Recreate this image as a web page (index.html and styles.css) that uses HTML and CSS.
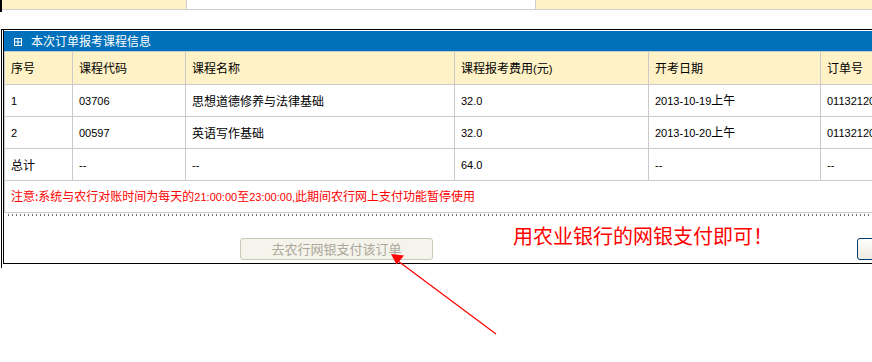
FILE: index.html
```html
<!DOCTYPE html>
<html lang="zh-CN">
<head>
<meta charset="utf-8">
<title>本次订单报考课程信息</title>
<link rel="stylesheet" href="styles.css">
</head>
<body>
<div class="top">
  <div class="strip">
    <div class="sc sc1"></div>
    <div class="sc sc2"></div>
    <div class="sc sc3"></div>
  </div>
</div>
<div class="box">
  <div class="inner">
    <div class="bar">
      <svg class="bar-icon" width="8" height="8" viewBox="0 0 8 8"><rect x="0.5" y="0.5" width="7" height="7" fill="none" stroke="#fff" stroke-width="1"/><path d="M4 1v6M1 4h6" stroke="#fff" stroke-width="1"/></svg>
      <span class="bar-title">本次订单报考课程信息</span>
    </div>
    <table class="grid">
      <colgroup>
        <col class="w1"><col class="w2"><col class="w3"><col class="w4"><col class="w5"><col class="w6">
      </colgroup>
      <thead>
        <tr class="head">
          <th>序号</th><th>课程代码</th><th>课程名称</th><th>课程报考费用<span class="n">(</span>元<span class="n">)</span></th><th>开考日期</th><th>订单号</th>
        </tr>
      </thead>
      <tbody>
        <tr>
          <td class="n">1</td><td class="n">03706</td><td>思想道德修养与法律基础</td><td class="n">32.0</td><td><span class="n">2013-10-19</span>上午</td><td class="n">0113212001</td>
        </tr>
        <tr>
          <td class="n">2</td><td class="n">00597</td><td>英语写作基础</td><td class="n">32.0</td><td><span class="n">2013-10-20</span>上午</td><td class="n">0113212002</td>
        </tr>
        <tr>
          <td>总计</td><td class="n">--</td><td class="n">--</td><td class="n">64.0</td><td class="n">--</td><td class="n">--</td>
        </tr>
        <tr class="note">
          <td colspan="6">注意:系统与农行对账时间为每天的<span class="n">21:00:00</span>至<span class="n">23:00:00,</span>此期间农行网上支付功能暂停使用</td>
        </tr>
      </tbody>
    </table>
    <div class="dots"></div>
    <div class="actions">
      <button class="pay" type="button" disabled>去农行网银支付该订单</button>
      <span class="tip">用农业银行的网银支付即可！</span>
      <button class="other" type="button" aria-label="返回"></button>
    </div>
  </div>
</div>
<svg class="arrow" width="872" height="362" viewBox="0 0 872 362">
  <line x1="398" y1="261" x2="496" y2="334" stroke="#f00" stroke-width="1.2"/>
  <polygon points="391,254 404,255.5 396.5,264.5" fill="#f00"/>
</svg>
</body>
</html>
```

FILE: styles.css
```css
* { box-sizing: border-box; }
html, body { margin: 0; padding: 0; }
body {
  width: 872px;
  height: 362px;
  overflow: hidden;
  background: #fff;
  position: relative;
  font-family: "Noto Sans CJK SC", "Liberation Sans", sans-serif;
  font-size: 12px;
  color: #000;
}
.top {
  border-left: 2px solid #000;
  height: 12px;
}
.strip {
  display: flex;
  height: 10px;
  border-bottom: 1px solid #cfcfcf;
}
.sc { height: 9px; }
.sc1 { width: 185px; background: #fff2c6; border-right: 1px solid #cfcfcf; }
.sc2 { width: 349px; background: #fff; border-right: 1px solid #cfcfcf; }
.sc3 { flex: 1; background: #fff2c6; }

.box {
  margin-top: 17px;
  margin-left: 1px;
  width: 1000px;
  border-left: 1px solid #000;
  border-top: 1px solid #000;
  padding-left: 1px;
  padding-bottom: 4px;
}
.inner {
  border-left: 1px solid #000;
  border-bottom: 1px solid #000;
  padding-top: 1px;
}
.bar {
  height: 20px;
  background: #0071ba;
  color: #fff;
  display: flex;
  align-items: center;
  padding-left: 10px;
}
.bar-icon { display: block; margin-top: 1px; }
.bar-title {
  margin-left: 9px;
  font-size: 12px;
  line-height: 20px;
}

.grid {
  table-layout: fixed;
  border-collapse: separate;
  border-spacing: 0;
  width: 996px;
  border-top: 1px solid #cacaca;
  border-left: 1px solid #cacaca;
}
.w1 { width: 68px; }
.w2 { width: 113px; }
.w3 { width: 269px; }
.w4 { width: 194px; }
.w5 { width: 172px; }
.w6 { width: 180px; }
.grid th, .grid td {
  border-right: 1px solid #cacaca;
  border-bottom: 1px solid #cacaca;
  padding: 0 6px;
  text-align: left;
  vertical-align: middle;
  white-space: nowrap;
  overflow: hidden;
  font-weight: normal;
  height: 32px;
  line-height: 16px;
}
.grid .head th {
  background: #fff2c6;
  height: 33px;
}
.n {
  font-family: "Liberation Sans", sans-serif;
  font-size: 11px;
}
.note td {
  color: #f00;
  border-right: none;
}

.dots {
  margin-top: 1px;
  margin-left: 4px;
  height: 2px;
  background: repeating-linear-gradient(to right, #6e6e6e 0 1px, transparent 1px 4px);
}
.actions {
  display: flex;
  align-items: flex-start;
  height: 47px;
  padding-left: 236px;
}
.pay {
  margin-top: 22px;
  width: 193px;
  height: 22px;
  border: 1px solid #cbc8b8;
  border-radius: 3px;
  background: #f4f3ec;
  color: #aca899;
  font-family: "Noto Sans CJK SC", sans-serif;
  font-size: 13px;
  line-height: 18px;
  padding: 0;
}
.tip {
  margin-top: 8px;
  margin-left: 80px;
  width: 344px;
  color: #f00;
  font-family: "Noto Sans CJK SC", sans-serif;
  font-size: 20px;
  line-height: 24px;
  white-space: nowrap;
}
.other {
  margin-top: 22px;
  width: 80px;
  height: 22px;
  border: 1px solid #003c74;
  border-radius: 3px;
  background: linear-gradient(#fff, #eceae0);
  padding: 0;
}
.arrow {
  position: absolute;
  left: 0;
  top: 0;
  pointer-events: none;
}
```
